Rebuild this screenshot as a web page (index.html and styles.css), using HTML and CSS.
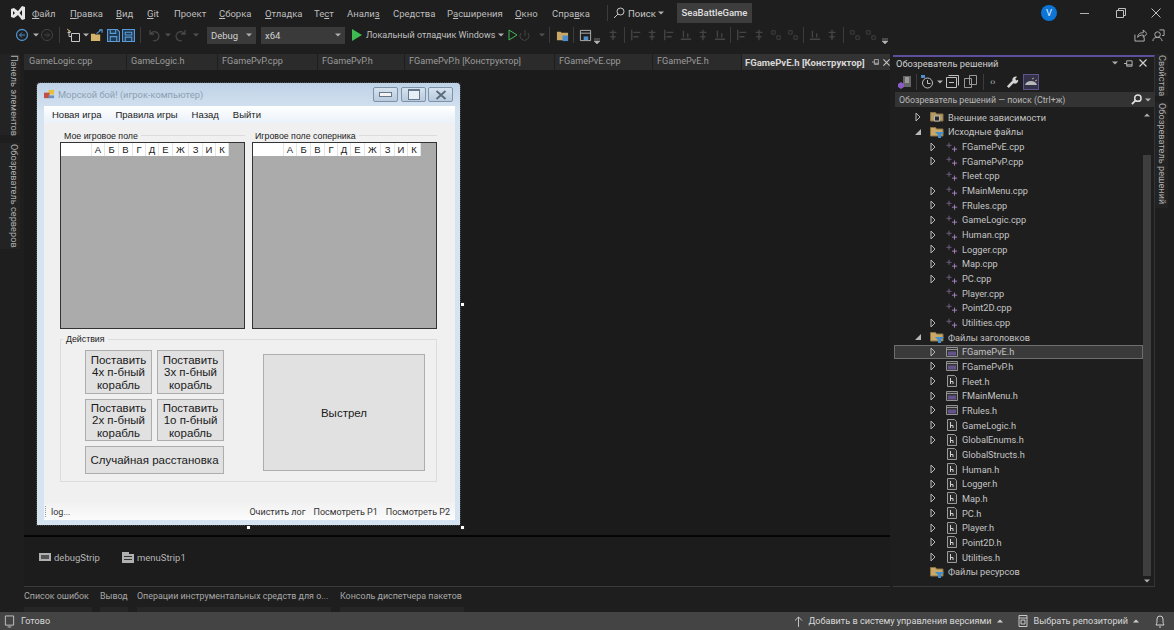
FILE: index.html
```html
<!DOCTYPE html>
<html lang="ru">
<head>
  <meta charset="UTF-8">
  <title>SeaBattleGame</title>
  <link rel="stylesheet" href="styles.css">
</head>
<body>
  <svg class="defs" width="0" height="0">
    <symbol id="ic-closed" viewBox="0 0 8 10"><path d="M2 1l4 4-4 4z" fill="none" stroke="#b8b8b8"/></symbol>
    <symbol id="ic-open" viewBox="0 0 8 10"><path d="M7 2v6H1z" fill="#b8b8b8"/></symbol>
    <symbol id="ic-cpp" viewBox="0 0 14 12"><path d="M3.500 1v6M.5 4h6" stroke="#7a6590" fill="none"/><path d="M10 5.500v6M7 8.500h6" stroke="#b48cd2" fill="none"/></symbol>
    <symbol id="ic-h" viewBox="0 0 12 12"><path d="M1.500 .5h7l2 2v9h-9z" fill="#2a2a2a" stroke="#9a9a9a"/><path d="M4.500 3v6M4.500 6.500h2.500v2.500" fill="none" stroke="#d0d0d0"/></symbol>
    <symbol id="ic-form" viewBox="0 0 12 12"><path d="M.5 1.500h11v9H.5z" fill="#333" stroke="#929292"/><path d="M.5 3.500h11" stroke="#929292"/><path d="M2 5.500h8v4H2z" fill="#64528a"/></symbol>
    <symbol id="ic-folder" viewBox="0 0 14 12"><path d="M.5 1.500h5l1 1.500h6.500v7H.5z" fill="#c9a868" stroke="#8a7446"/><path d="M5 6h9L11 9v3H8V9z" fill="#3f8fd0"/></symbol>
    <symbol id="ic-ext" viewBox="0 0 14 12"><path d="M.5 1.500h5l1 1.500h6.500v7H.5z" fill="#b49a64" stroke="#8a7446"/><path d="M4.500 5h5v5h-5z" fill="#2a2a2a" stroke="#b8b8b8"/></symbol>
    <symbol id="ic-dim1" viewBox="0 0 14 14"><path d="M2 1v12M4 4h8M4 9h6" fill="none" stroke="#444" stroke-width="1.600"/></symbol>
    <symbol id="ic-dim2" viewBox="0 0 14 14"><path d="M7 1v12M3 4h8M4 9h6" fill="none" stroke="#444" stroke-width="1.600"/></symbol>
    <symbol id="ic-dim3" viewBox="0 0 14 14"><path d="M1 12h12M4 2v8M9 5v5" fill="none" stroke="#444" stroke-width="1.600"/></symbol>
    <symbol id="ic-dim4" viewBox="0 0 14 14"><path d="M2 2h4v4H2zM8 8h4v4H8z" fill="none" stroke="#444"/></symbol>
    <symbol id="ic-drop" viewBox="0 0 6 4"><path d="M0 .5h6L3 3.500z" fill="#b0b0b0"/></symbol>
  </svg>

  <!-- Главное меню -->
  <header class="menubar">
    <svg class="vs-logo" viewBox="0 0 14 14" width="14" height="14"><path d="M0 3l3-1 4 3 4-5 3 1v12l-3 1-4-5-4 3-3-1zM2 5v4l2-2zM11 4L8.500 7 11 10z" fill="#e6e6e6" fill-rule="evenodd"/></svg>
    <nav class="menu">
      <span class="m-file"><u>Ф</u>айл</span>
      <span class="m-edit"><u>П</u>равка</span>
      <span class="m-view"><u>В</u>ид</span>
      <span class="m-git"><u>G</u>it</span>
      <span class="m-proj">Проект</span>
      <span class="m-build"><u>С</u>борка</span>
      <span class="m-debug"><u>О</u>тладка</span>
      <span class="m-test">Те<u>с</u>т</span>
      <span class="m-anal">Анали<u>з</u></span>
      <span class="m-tools">Сре<u>д</u>ства</span>
      <span class="m-ext">Р<u>а</u>сширения</span>
      <span class="m-win"><u>О</u>кно</span>
      <span class="m-help">Спра<u>в</u>ка</span>
    </nav>
    <span class="menu-sep"></span>
    <svg class="search-ic" viewBox="0 0 12 12" width="12" height="12"><circle cx="7.500" cy="4.500" r="3.500" fill="none" stroke="#c8c8c8"/><path d="M5 7l-4 4" stroke="#c8c8c8"/></svg>
    <span class="search-label">Поиск</span>
    <svg class="drop" width="6" height="4"><use href="#ic-drop"/></svg>
    <span class="project-name">SeaBattleGame</span>
    <span class="avatar">V</span>
    <svg class="win-btn win-min" viewBox="0 0 10 10" width="10" height="10"><path d="M0 5.500h9" stroke="#b0b0b0"/></svg>
    <svg class="win-btn win-max" viewBox="0 0 10 10" width="10" height="10"><path d="M.5 2.500h7v7h-7zM2.500 2.500v-2h7v7h-2" fill="none" stroke="#c0c0c0"/></svg>
    <svg class="win-btn win-close" viewBox="0 0 10 10" width="10" height="10"><path d="M.5.500l9 9M9.500.500l-9 9" stroke="#c0c0c0"/></svg>
  </header>

  <!-- Панель инструментов -->
  <div class="toolbar">
    <span class="grip"></span>
    <svg class="tb-back" viewBox="0 0 14 14" width="14" height="14"><circle cx="7" cy="7" r="5.500" fill="none" stroke="#4f8fc9" stroke-width="1.300"/><path d="M10 7H4.500M7 4.500L4.500 7 7 9.500" fill="none" stroke="#4f8fc9"/></svg>
    <svg class="drop tb-d1" width="6" height="4"><use href="#ic-drop"/></svg>
    <svg class="tb-fwd" viewBox="0 0 14 14" width="14" height="14"><circle cx="7" cy="7" r="5.500" fill="none" stroke="#444"/><path d="M4 7h5.500M7 4.500L9.500 7 7 9.500" fill="none" stroke="#444"/></svg>
    <span class="tb-sep tb-s1"></span>
    <svg class="tb-new" viewBox="0 0 14 14" width="14" height="14"><path d="M5.500 5.500h8v8h-8zM1.500 4.500h3M3 2v6.500h2.500" fill="none" stroke="#c8c8c8"/><path d="M1 1l4 3" stroke="#d0b060"/></svg>
    <svg class="drop tb-d2" width="6" height="4"><use href="#ic-drop"/></svg>
    <svg class="tb-open" viewBox="0 0 14 14" width="13" height="13"><path d="M1 5h4l1 1h5v7H1z" fill="#d4b46c"/><path d="M7 5l5-4M10 1h3v3" fill="none" stroke="#5b9bd5" stroke-width="1.200"/></svg>
    <svg class="tb-save" viewBox="0 0 12 12" width="13" height="13"><path d="M.5.500h9l2 2v9H.5z" fill="#1f3a55" stroke="#5b9bd5"/><path d="M3 .5v3.500h5V.5M3 11.500V7h6v4.500" fill="none" stroke="#5b9bd5"/></svg>
    <svg class="tb-saveall" viewBox="0 0 12 12" width="13" height="13"><path d="M.5.500h11v11H.5z" fill="#1f3a55" stroke="#5b9bd5"/><path d="M3 3h6v2.500H3zM3 11V7.500h6V11" fill="none" stroke="#5b9bd5"/></svg>
    <span class="tb-sep tb-s2"></span>
    <svg class="tb-undo" viewBox="0 0 14 14" width="14" height="14"><path d="M3 2v4h4M3.500 6A4.500 4.500 0 1 1 6 12.500" fill="none" stroke="#484848" stroke-width="1.300"/></svg>
    <svg class="drop dim tb-d3" width="6" height="4"><use href="#ic-drop"/></svg>
    <svg class="tb-redo" viewBox="0 0 14 14" width="14" height="14"><path d="M11 2v4H7M10.500 6A4.500 4.500 0 1 0 8 12.500" fill="none" stroke="#484848" stroke-width="1.300"/></svg>
    <svg class="drop dim tb-d4" width="6" height="4"><use href="#ic-drop"/></svg>
    <span class="combo combo-debug">Debug<svg class="drop" width="6" height="4"><use href="#ic-drop"/></svg></span>
    <span class="combo combo-arch">x64<svg class="drop" width="6" height="4"><use href="#ic-drop"/></svg></span>
    <svg class="tb-play" viewBox="0 0 10 12" width="10" height="12"><path d="M0 0l10 6-10 6z" fill="#3fb950"/></svg>
    <span class="run-label">Локальный отладчик Windows</span>
    <svg class="drop tb-d5" width="6" height="4"><use href="#ic-drop"/></svg>
    <svg class="tb-play2" viewBox="0 0 10 12" width="10" height="12"><path d="M1 1l8 5-8 5z" fill="none" stroke="#3fb950"/></svg>
    <svg class="tb-reload" viewBox="0 0 12 12" width="12" height="12"><path d="M6 1v6M2 4a4.500 4.500 0 1 0 7 0" fill="none" stroke="#444"/></svg>
    <svg class="drop dim tb-d6" width="6" height="4"><use href="#ic-drop"/></svg>
    <span class="tb-sep tb-s3"></span>
    <svg class="tb-folder" viewBox="0 0 14 14" width="13" height="13"><path d="M1 3h4l1 1h7v8H1z" fill="#c9a868"/><path d="M7 7h6v6H7z" fill="#4f8fc9"/></svg>
    <span class="tb-sep tb-s4"></span>
    <svg class="tb-panel" viewBox="0 0 14 14" width="13" height="13"><path d="M1.500 1.500h11v11h-11zM1.500 4.500h11" fill="none" stroke="#b8b8b8"/><path d="M5 8h5v4H5z" fill="#4f8fc9"/></svg>
    <svg class="tb-d7" viewBox="0 0 6 6" width="6" height="6"><path d="M0 1h6M0 3h6L3 6z" fill="#b0b0b0" stroke="#b0b0b0" stroke-width=".6"/></svg>
    <span class="grip tb-grip2"></span>
    <div class="dim-icons">
      <svg width="12" height="12"><use href="#ic-dim2"/></svg>
      <span class="tb-sep"></span>
      <svg width="12" height="12"><use href="#ic-dim1"/></svg>
      <svg width="12" height="12"><use href="#ic-dim2"/></svg>
      <svg width="12" height="12"><use href="#ic-dim1"/></svg>
      <svg width="12" height="12"><use href="#ic-dim3"/></svg>
      <svg width="12" height="12"><use href="#ic-dim2"/></svg>
      <svg width="12" height="12"><use href="#ic-dim3"/></svg>
      <span class="tb-sep"></span>
      <svg width="12" height="12"><use href="#ic-dim1"/></svg>
      <svg width="12" height="12"><use href="#ic-dim2"/></svg>
      <svg width="12" height="12"><use href="#ic-dim4"/></svg>
      <svg width="12" height="12"><use href="#ic-dim4"/></svg>
      <span class="tb-sep"></span>
      <svg width="12" height="12"><use href="#ic-dim3"/></svg>
      <svg width="12" height="12"><use href="#ic-dim2"/></svg>
      <span class="tb-sep"></span>
      <svg width="12" height="12"><use href="#ic-dim4"/></svg>
      <svg width="12" height="12"><use href="#ic-dim4"/></svg>
    </div>
    <svg class="tb-d8" viewBox="0 0 6 6" width="6" height="6"><path d="M0 1h6M0 3h6L3 6z" fill="#b0b0b0" stroke="#b0b0b0" stroke-width=".6"/></svg>
    <svg class="tb-share" viewBox="0 0 14 14" width="13" height="13"><path d="M1 6v7h10V9M4 9c0-4 3-5 6-5V1l4 4-4 4V6.500C7 6.500 5.500 7 4 9z" fill="none" stroke="#b8b8b8"/></svg>
    <svg class="tb-feedback" viewBox="0 0 14 14" width="13" height="13"><circle cx="6" cy="6" r="3" fill="none" stroke="#b8b8b8"/><path d="M1 13c0-3 2-4 5-4s4 1 5 4M8 1h5v6h-2" fill="none" stroke="#b8b8b8"/></svg>
  </div>

  <main class="main">
    <aside class="side-strip">
      <span class="side-tab side-toolbox">Панель элементов</span>
      <span class="side-tab side-servers">Обозреватель серверов</span>
    </aside>

    <section class="doc">
      <div class="tabs">
        <span class="tab tab-1">GameLogic.cpp</span>
        <span class="tab tab-2">GameLogic.h</span>
        <span class="tab tab-3">FGamePvP.cpp</span>
        <span class="tab tab-4">FGamePvP.h</span>
        <span class="tab tab-5">FGamePvP.h [Конструктор]</span>
        <span class="tab tab-6">FGamePvE.cpp</span>
        <span class="tab tab-7">FGamePvE.h</span>
        <span class="tab tab-active">FGamePvE.h [Конструктор]
          <svg class="tab-pin" viewBox="0 0 10 10" width="8" height="8"><path d="M0 5h3M3 2v6h5V2zM3 6.500h5" fill="none" stroke="#c0c0c0"/></svg>
          <svg class="tab-close" viewBox="0 0 8 8" width="7" height="7"><path d="M.5.500l7 7M7.500.500l-7 7" stroke="#c8c8c8" stroke-width="1.200"/></svg>
        </span>
      </div>

      <div class="designer">
        <!-- Форма на холсте конструктора -->
        <div class="form">
          <div class="form-title">
            <svg class="form-ic" viewBox="0 0 12 12" width="11" height="11"><path d="M5 1h6v5H5z" fill="#e8c040"/><path d="M0 4h6v6H0z" fill="#c05040"/><path d="M5 7h6v3H5z" fill="#6a8fc0"/></svg>
            <span class="form-caption">Морской бой! (игрок-компьютер)</span>
            <span class="cap-btn cap-min"></span>
            <span class="cap-btn cap-max"></span>
            <span class="cap-btn cap-close">
              <svg viewBox="0 0 12 10" width="12" height="10"><path d="M1.500 1l9 8M10.500 1l-9 8" stroke="#5a6a7a" stroke-width="1.800"/></svg>
            </span>
          </div>
          <div class="form-client">
            <div class="form-menu">
              <span>Новая игра</span>
              <span>Правила игры</span>
              <span>Назад</span>
              <span>Выйти</span>
            </div>
            <div class="boards">
              <div class="board">
                <div class="board-label">Мое игровое поле</div>
                <div class="grid">
                  <div class="grid-head">
                    <span></span><span>А</span><span>Б</span><span>В</span><span>Г</span><span>Д</span><span>Е</span><span>Ж</span><span>З</span><span>И</span><span>К</span>
                  </div>
                </div>
              </div>
              <div class="board">
                <div class="board-label">Игровое поле соперника</div>
                <div class="grid">
                  <div class="grid-head">
                    <span></span><span>А</span><span>Б</span><span>В</span><span>Г</span><span>Д</span><span>Е</span><span>Ж</span><span>З</span><span>И</span><span>К</span>
                  </div>
                </div>
              </div>
            </div>
            <fieldset class="actions">
              <legend>Действия</legend>
              <div class="place-btns">
                <button class="btn">Поставить<br>4х п-бный<br>корабль</button>
                <button class="btn">Поставить<br>3х п-бный<br>корабль</button>
                <button class="btn">Поставить<br>2х п-бный<br>корабль</button>
                <button class="btn">Поставить<br>1о п-бный<br>корабль</button>
                <button class="btn btn-wide">Случайная расстановка</button>
              </div>
              <button class="btn btn-shot">Выстрел</button>
            </fieldset>
            <div class="form-status">
              <span class="status-grip"></span>
              <span class="log-label">log...</span>
              <span class="status-link">Очистить лог</span>
              <span class="status-link">Посмотреть Р1</span>
              <span class="status-link">Посмотреть Р2</span>
            </div>
          </div>
          <span class="handle handle-r"></span>
          <span class="handle handle-b"></span>
          <span class="handle handle-c"></span>
        </div>
      </div>

      <div class="tray">
        <span class="tray-item">
          <svg viewBox="0 0 12 10" width="12" height="10"><path d="M0 0h12v8H0z" fill="#b0b0b0"/><path d="M2 2h8v4H2z" fill="#555"/></svg>
          debugStrip
        </span>
        <span class="tray-item">
          <svg viewBox="0 0 12 11" width="12" height="11"><path d="M0 0h7v2h5v9H0z" fill="#b0b0b0"/><path d="M2 4h8v1H2zM2 7h8v1H2z" fill="#333"/></svg>
          menuStrip1
        </span>
      </div>
    </section>

    <section class="solution">
      <div class="sol-title">
        <span>Обозреватель решений</span>
        <span class="sol-grip"></span>
        <svg class="drop" width="6" height="4"><use href="#ic-drop"/></svg>
        <svg class="sol-pin" viewBox="0 0 10 10" width="9" height="9"><path d="M0 5h3M3 2v6h6V2zM3 6.500h6" fill="none" stroke="#c0c0c0"/></svg>
        <svg class="sol-close" viewBox="0 0 8 8" width="8" height="8"><path d="M.5.500l7 7M7.500.500l-7 7" stroke="#d0d0d0" stroke-width="1.200"/></svg>
      </div>
      <div class="sol-tools">
        <svg class="st-home" viewBox="0 0 14 14" width="14" height="14"><path d="M5 1h8v11H5z" fill="#666"/><path d="M7 3h4M7 5h4M7 7h4" stroke="#ccc"/><path d="M0 9l3-2 3 2v3l-3 2-3-2z" fill="#8a5cc8"/></svg>
        <span class="tb-sep st-sep"></span>
        <svg class="st-hist" viewBox="0 0 14 14" width="14" height="14"><circle cx="7.500" cy="8" r="5" fill="none" stroke="#c0c0c0"/><path d="M7.500 5v3.500h3" fill="none" stroke="#c0c0c0"/><path d="M1 0h4v3H1z" fill="#4f8fc9"/></svg>
        <svg class="drop st-drop" width="6" height="4"><use href="#ic-drop"/></svg>
        <svg class="st-collapse" viewBox="0 0 13 13" width="13" height="13"><path d="M2.500 .5h10v10M.5 2.500h10v10H.5zM3 7.500h5" fill="none" stroke="#c0c0c0"/></svg>
        <svg class="st-copy" viewBox="0 0 13 13" width="13" height="13"><path d="M5.500 .5h7v9h-7zM.5 3.500h7v9h-7z" fill="none" stroke="#999"/></svg>
        <span class="tb-sep st-sep2"></span>
        <span class="st-code">‹›</span>
        <svg class="st-wrench" viewBox="0 0 14 14" width="13" height="13"><path d="M1 12l6-6a3.500 3.500 0 0 1 5-4l-2 2 1 2 2-1a3.500 3.500 0 0 1-5 4l-5 5z" fill="#d4d4d4"/></svg>
        <span class="st-active">
          <svg viewBox="0 0 14 12" width="14" height="12"><path d="M1 9c1-3 3-4 6-4s5 1 6 4z" fill="#b8b8b8"/><path d="M8 3l2-1M11 5l2-1" stroke="#c9a868"/></svg>
        </span>
      </div>
      <div class="sol-search">
        <span>Обозреватель решений — поиск (Ctrl+ж)</span>
        <svg class="sol-search-ic" viewBox="0 0 12 12" width="11" height="11"><circle cx="7.500" cy="4.500" r="3.500" fill="none" stroke="#e0e0e0" stroke-width="1.600"/><path d="M5 7l-4 4" stroke="#e0e0e0" stroke-width="2"/></svg>
        <svg class="drop" width="6" height="4"><use href="#ic-drop"/></svg>
      </div>
      <div class="sol-body">
        <ul class="tree">
          <li class="row lvl1"><svg class="tw"><use href="#ic-closed"/></svg><svg class="ic14"><use href="#ic-ext"/></svg>Внешние зависимости</li>
          <li class="row lvl1"><svg class="tw"><use href="#ic-open"/></svg><svg class="ic14"><use href="#ic-folder"/></svg>Исходные файлы</li>
          <li class="row lvl2"><svg class="tw"><use href="#ic-closed"/></svg><svg class="ic12"><use href="#ic-cpp"/></svg>FGamePvE.cpp</li>
          <li class="row lvl2"><svg class="tw"><use href="#ic-closed"/></svg><svg class="ic12"><use href="#ic-cpp"/></svg>FGamePvP.cpp</li>
          <li class="row lvl2"><span class="tw"></span><svg class="ic12"><use href="#ic-cpp"/></svg>Fleet.cpp</li>
          <li class="row lvl2"><svg class="tw"><use href="#ic-closed"/></svg><svg class="ic12"><use href="#ic-cpp"/></svg>FMainMenu.cpp</li>
          <li class="row lvl2"><svg class="tw"><use href="#ic-closed"/></svg><svg class="ic12"><use href="#ic-cpp"/></svg>FRules.cpp</li>
          <li class="row lvl2"><svg class="tw"><use href="#ic-closed"/></svg><svg class="ic12"><use href="#ic-cpp"/></svg>GameLogic.cpp</li>
          <li class="row lvl2"><svg class="tw"><use href="#ic-closed"/></svg><svg class="ic12"><use href="#ic-cpp"/></svg>Human.cpp</li>
          <li class="row lvl2"><svg class="tw"><use href="#ic-closed"/></svg><svg class="ic12"><use href="#ic-cpp"/></svg>Logger.cpp</li>
          <li class="row lvl2"><svg class="tw"><use href="#ic-closed"/></svg><svg class="ic12"><use href="#ic-cpp"/></svg>Map.cpp</li>
          <li class="row lvl2"><svg class="tw"><use href="#ic-closed"/></svg><svg class="ic12"><use href="#ic-cpp"/></svg>PC.cpp</li>
          <li class="row lvl2"><span class="tw"></span><svg class="ic12"><use href="#ic-cpp"/></svg>Player.cpp</li>
          <li class="row lvl2"><span class="tw"></span><svg class="ic12"><use href="#ic-cpp"/></svg>Point2D.cpp</li>
          <li class="row lvl2"><svg class="tw"><use href="#ic-closed"/></svg><svg class="ic12"><use href="#ic-cpp"/></svg>Utilities.cpp</li>
          <li class="row lvl1"><svg class="tw"><use href="#ic-open"/></svg><svg class="ic14"><use href="#ic-folder"/></svg>Файлы заголовков</li>
          <li class="row lvl2 selected"><svg class="tw"><use href="#ic-closed"/></svg><svg class="ic12"><use href="#ic-form"/></svg>FGamePvE.h</li>
          <li class="row lvl2"><svg class="tw"><use href="#ic-closed"/></svg><svg class="ic12"><use href="#ic-form"/></svg>FGamePvP.h</li>
          <li class="row lvl2"><svg class="tw"><use href="#ic-closed"/></svg><svg class="ic12"><use href="#ic-h"/></svg>Fleet.h</li>
          <li class="row lvl2"><svg class="tw"><use href="#ic-closed"/></svg><svg class="ic12"><use href="#ic-form"/></svg>FMainMenu.h</li>
          <li class="row lvl2"><svg class="tw"><use href="#ic-closed"/></svg><svg class="ic12"><use href="#ic-form"/></svg>FRules.h</li>
          <li class="row lvl2"><svg class="tw"><use href="#ic-closed"/></svg><svg class="ic12"><use href="#ic-h"/></svg>GameLogic.h</li>
          <li class="row lvl2"><svg class="tw"><use href="#ic-closed"/></svg><svg class="ic12"><use href="#ic-h"/></svg>GlobalEnums.h</li>
          <li class="row lvl2"><span class="tw"></span><svg class="ic12"><use href="#ic-h"/></svg>GlobalStructs.h</li>
          <li class="row lvl2"><svg class="tw"><use href="#ic-closed"/></svg><svg class="ic12"><use href="#ic-h"/></svg>Human.h</li>
          <li class="row lvl2"><svg class="tw"><use href="#ic-closed"/></svg><svg class="ic12"><use href="#ic-h"/></svg>Logger.h</li>
          <li class="row lvl2"><svg class="tw"><use href="#ic-closed"/></svg><svg class="ic12"><use href="#ic-h"/></svg>Map.h</li>
          <li class="row lvl2"><svg class="tw"><use href="#ic-closed"/></svg><svg class="ic12"><use href="#ic-h"/></svg>PC.h</li>
          <li class="row lvl2"><svg class="tw"><use href="#ic-closed"/></svg><svg class="ic12"><use href="#ic-h"/></svg>Player.h</li>
          <li class="row lvl2"><svg class="tw"><use href="#ic-closed"/></svg><svg class="ic12"><use href="#ic-h"/></svg>Point2D.h</li>
          <li class="row lvl2"><svg class="tw"><use href="#ic-closed"/></svg><svg class="ic12"><use href="#ic-h"/></svg>Utilities.h</li>
          <li class="row lvl1"><span class="tw"></span><svg class="ic14"><use href="#ic-folder"/></svg>Файлы ресурсов</li>
        </ul>
        <div class="scrollbar">
          <svg class="scroll-up" width="6" height="4"><use href="#ic-drop"/></svg>
          <div class="scroll-thumb"></div>
          <svg class="scroll-down" width="6" height="4"><use href="#ic-drop"/></svg>
        </div>
      </div>
    </section>

    <aside class="side-strip side-right">
      <span class="side-tab side-props">Свойства</span>
      <span class="side-tab side-sol">Обозреватель решений</span>
    </aside>
  </main>

  <div class="bottom-tabs">
    <span class="btab btab-1">Список ошибок</span>
    <span class="btab btab-2">Вывод</span>
    <span class="btab btab-3">Операции инструментальных средств для о...</span>
    <span class="btab btab-4">Консоль диспетчера пакетов</span>
  </div>

  <footer class="statusbar">
    <svg class="sb-ic" viewBox="0 0 12 14" width="11" height="14"><path d="M1.500 1.500h9v10h-9zM4 13.500h4" fill="none" stroke="#c8c8c8"/></svg>
    <span class="sb-ready">Готово</span>
    <svg class="sb-up" viewBox="0 0 10 12" width="9" height="11"><path d="M5 12V1M1 5l4-4 4 4" fill="none" stroke="#d0d0d0"/></svg>
    <span class="sb-text sb-vcs">Добавить в систему управления версиями</span>
    <svg class="sb-tri" viewBox="0 0 6 4" width="6" height="4"><path d="M0 3.500h6L3 .5z" fill="#d0d0d0"/></svg>
    <svg class="sb-repo" viewBox="0 0 10 12" width="10" height="12"><path d="M1 .5h8v11H1zM1 3h8M3 5h4v4H3z" fill="none" stroke="#c8c8c8"/></svg>
    <span class="sb-text sb-repo-text">Выбрать репозиторий</span>
    <svg class="sb-tri" viewBox="0 0 6 4" width="6" height="4"><path d="M0 3.500h6L3 .5z" fill="#d0d0d0"/></svg>
    <svg class="sb-bell" viewBox="0 0 10 14" width="10" height="14"><path d="M1 11c1-2 1-3 1-6a3 3 0 0 1 6 0c0 3 0 4 1 6zM4 13h2" fill="none" stroke="#d0d0d0"/></svg>
  </footer>
</body>
</html>
```

FILE: styles.css
```css
* { box-sizing: border-box; }
html, body { margin: 0; height: 100%; }
body {
  width: 1174px;
  height: 630px;
  overflow: hidden;
  display: flex;
  flex-direction: column;
  background: #1e1e1e;
  color: #c8c8c8;
  font-family: Roboto, "Noto Sans", sans-serif;
  font-size: 9.500px;
}
svg { flex: none; display: block; }
.defs { position: absolute; }
.drop.dim { opacity: .35; }

/* menu */
.menubar { height: 26px; display: flex; align-items: center; flex: none; }
.vs-logo { margin-left: 11px; }
.menu { display: flex; margin-left: 7px; width: 575px; }
.menu span { flex: none; color: #bdbdbd; }
.menu u { text-decoration-thickness: 1px; }
.m-file { width: 38px; }
.m-edit { width: 46px; }
.m-view { width: 31px; }
.m-git { width: 27px; }
.m-proj { width: 45px; }
.m-build { width: 46px; }
.m-debug { width: 49px; }
.m-test { width: 33px; }
.m-anal { width: 46px; }
.m-tools { width: 54px; }
.m-ext { width: 68px; }
.m-win { width: 37px; }
.menu-sep { width: 1px; height: 16px; background: #3c3c3c; }
.search-ic { margin-left: 5px; }
.search-label { margin-left: 3px; width: 30px; color: #c8c8c8; }
.menubar > .drop { margin-left: 0; }
.project-name {
  margin-left: 13px;
  width: 75px;
  height: 20px;
  line-height: 20px;
  text-align: center;
  background: #3d3d3d;
  color: #e0e0e0;
  font-weight: 500;
}
.avatar {
  margin-left: auto;
  width: 16px;
  height: 16px;
  border-radius: 50%;
  background: #0c75d6;
  color: #e8f2ff;
  text-align: center;
  line-height: 16px;
}
.win-min { margin-left: 23px; }
.win-max { margin-left: 26px; }
.win-close { margin-left: 25px; margin-right: 13px; }

/* toolbar */
.toolbar { height: 26px; display: flex; align-items: center; flex: none; padding-left: 10px; padding-bottom: 8px; }
.grip { width: 4px; height: 14px; background-image: radial-gradient(#4a4a4a 35%, transparent 40%); background-size: 2px 2px; }
.tb-sep { width: 1px; height: 16px; background: #3c3c3c; }
.tb-back { margin-left: 1px; }
.tb-d1 { margin-left: 4px; }
.tb-fwd { margin-left: 1px; }
.tb-s1 { margin-left: 5px; }
.tb-new { margin-left: 6px; }
.tb-d2 { margin-left: 3px; }
.tb-open { margin-left: 1px; }
.tb-save { margin-left: 4px; }
.tb-saveall { margin-left: 2px; }
.tb-s2 { margin-left: 5px; }
.tb-undo { margin-left: 6px; }
.tb-d3 { margin-left: 4px; }
.tb-redo { margin-left: 3px; }
.tb-d4 { margin-left: 5px; }
.combo {
  display: flex;
  align-items: center;
  justify-content: space-between;
  height: 17px;
  padding: 0 4px;
  background: #3a3a3a;
  color: #d0d0d0;
}
.combo-debug { margin-left: 8px; width: 49px; }
.combo-arch { margin-left: 5px; width: 84px; }
.tb-play { margin-left: 7px; }
.run-label { margin-left: 4px; width: 131px; white-space: nowrap; color: #c0c0c0; font-size: 9px; }
.tb-d5 { margin-left: 1px; }
.tb-play2 { margin-left: 4px; }
.tb-reload { margin-left: 1px; }
.tb-d6 { margin-left: 8px; }
.tb-s3 { margin-left: 4px; }
.tb-folder { margin-left: 6px; }
.tb-s4 { margin-left: 4px; }
.tb-panel { margin-left: 5px; }
.tb-d7 { margin-left: 2px; align-self: flex-end; }
.tb-grip2 { margin-left: 2px; }
.dim-icons { display: flex; align-items: center; gap: 4.800px; margin-left: 1px; }
.tb-d8 { margin-left: 5px; align-self: flex-end; }
.tb-share { margin-left: auto; }
.tb-feedback { margin-left: 5px; margin-right: 9px; }

/* main area */
.main { flex: 1; min-height: 0; display: flex; }
.side-strip { width: 24px; flex: none; display: flex; flex-direction: column; padding-top: 2px; gap: 8px; align-items: flex-start; }
.side-tab {
  writing-mode: vertical-rl;
  width: 20px;
  background: #232323;
  color: #b0b0b0;
  padding: 1px 0 0 0;
  font-size: 9.200px;
  white-space: nowrap;
}
.side-toolbox { height: 81px; }
.side-servers { height: 106px; }
.side-right { width: 19px; padding-top: 2px; gap: 6px; }
.side-right .side-tab { width: 13px; }
.side-props { height: 42px; }
.side-sol { height: 106px; }

.doc { width: 866px; flex: none; display: flex; flex-direction: column; }
.tabs { height: 16px; margin-top: 2px; flex: none; display: flex; }
.tab {
  flex: none;
  line-height: 15px;
  padding-left: 4px;
  background: #2b2b2b;
  color: #9c9c9c;
  font-size: 9.100px;
  border-right: 1px solid #1e1e1e;
  white-space: nowrap;
}
.tab-1 { width: 103px; padding-left: 5px; }
.tab-2 { width: 91px; }
.tab-3 { width: 100px; }
.tab-4 { width: 87px; }
.tab-5 { width: 150px; }
.tab-6 { width: 98px; }
.tab-7 { width: 89px; }
.tab-active {
  width: 148px;
  padding-left: 3px;
  background: #333;
  color: #d8d8d8;
  font-weight: 700;
  font-size: 9.500px;
  display: flex;
  align-items: center;
  border-right: 0;
}
.tab-pin { margin-left: auto; }
.tab-close { margin-left: 3px; }

/* designer */
.designer { height: 467px; flex: none; position: relative; background: #1b1b1b; border-bottom: 2px solid #050505; }
.form {
  position: absolute;
  left: 13px;
  top: 13px;
  width: 423px;
  height: 442px;
  display: flex;
  flex-direction: column;
  padding: 0 5px 5px 7px;
  background: linear-gradient(#bfd2e6, #d6e4f2 30px);
  border-radius: 3px 3px 0 0;
  outline: 1px dotted #4a4a4a;
  font-family: "Liberation Sans", Arial, sans-serif;
}
.form-title { height: 23px; flex: none; display: flex; align-items: center; }
.form-caption { margin-left: 3px; color: #8c9fb2; font-size: 9.300px; font-family: Roboto, sans-serif; }
.cap-btn {
  height: 15px;
  width: 25px;
  border: 1px solid #7f93a8;
  border-radius: 2px;
  background: linear-gradient(#d6e2ee, #b8cade);
  display: flex;
  align-items: center;
  justify-content: center;
}
.cap-min { margin-left: auto; }
.cap-min::before { content: ""; width: 11px; height: 3px; background: #f4f4f4; border: 1px solid #66788c; }
.cap-max { margin-left: 3px; }
.cap-max::before { content: ""; width: 10px; height: 8px; border: 1px solid #66788c; border-top-width: 2px; background: #e8eef5; }
.cap-close { margin-left: 2px; margin-right: 2px; }

.form-client { flex: 1; min-height: 0; display: flex; flex-direction: column; background: #f0f0f0; }
.form-menu {
  height: 17px;
  flex: none;
  display: flex;
  align-items: center;
  gap: 14px;
  padding-left: 8px;
  background: linear-gradient(#fff, #eaf1f9);
  color: #1a1a1a;
  font-size: 9.500px;
}
.boards { display: flex; gap: 7px; padding: 6px 0 0 16px; }
.board { width: 185px; }
.board-label { height: 13px; display: flex; align-items: center; padding-left: 4px; font-size: 8.800px; color: #222; white-space: nowrap; }
.board:last-child .board-label { padding-left: 3px; }
.board-label::after { content: ""; flex: 1; height: 1px; background: #dcdcdc; margin-left: 3px; }
.grid { height: 187px; border: 1px solid #333; background: #ababab; }
.grid-head {
  display: grid;
  grid-template-columns: 31px 13px 14px 14px 13px 13px 14px 16px 14px 13px 13px;
  width: 168px;
  height: 13px;
  background: #fff;
  font-size: 9.500px;
  line-height: 13px;
  text-align: center;
  color: #222;
}
.grid-head span { border-right: 1px solid #e4e4e4; }

.actions {
  display: flex;
  margin: 5px 0 0 16px;
  padding: 6px 0 0 24px;
  width: 377px;
  height: 148px;
  border: 1px solid #dcdcdc;
  min-width: 0;
}
.actions legend { padding: 0 3px; margin-left: -22px; font-size: 8.800px; line-height: 10px; color: #222; }
.place-btns { display: grid; grid-template-columns: 67px 67px; grid-template-rows: 44px 42px 28px; gap: 5px; width: 139px; height: 124px; }
.btn {
  margin: 0;
  padding: 1px 0 0;
  background: #e1e1e1;
  border: 1px solid #adadad;
  color: #1a1a1a;
  font-family: "Liberation Sans", Arial, sans-serif;
  font-size: 11.500px;
  line-height: 12.500px;
}
.btn-wide { grid-column: 1 / 3; }
.btn-shot { width: 162px; height: 117px; margin: 4px 0 0 39px; flex: none; }

.form-status {
  margin-top: auto;
  height: 17px;
  flex: none;
  display: flex;
  align-items: center;
  background: linear-gradient(#f2f2f2, #fbfbfb);
  color: #333;
  font-family: Roboto, sans-serif;
  font-size: 9px;
}
.status-grip { width: 2px; height: 11px; margin-left: 1px; border-left: 1px dotted #999; }
.log-label { margin-left: 4px; margin-right: auto; }
.status-link { margin-right: 8px; white-space: nowrap; }
.status-link:last-child { margin-right: 5px; }
.handle { position: absolute; width: 5px; height: 5px; background: #fff; border: 1px solid #222; }
.handle-r { right: -5px; top: 219px; }
.handle-b { left: 209px; bottom: -5px; }
.handle-c { right: -5px; bottom: -5px; }

.tray { flex: 1; display: flex; align-items: flex-start; padding: 15px 0 0 15px; gap: 22px; background: #1c1c1c; border-bottom: 1px solid #3a3a3a; }
.tray-item { display: flex; gap: 3px; align-items: center; color: #b4b4b4; }

/* solution explorer */
.solution {
  margin: 3px 0 0 3px;
  width: 262px;
  flex: none;
  display: flex;
  flex-direction: column;
  border-top: 2px solid #5c4f9e;
  border-bottom: 1px solid #3a3a3a;
  border-right: 1px solid #333;
}
.sol-title { height: 14px; flex: none; display: flex; align-items: center; padding: 0 0 2px 3px; color: #d0d0d0; font-size: 9.300px; }
.sol-grip { flex: 1; height: 4px; margin: 0 4px; background-image: radial-gradient(#3c3c3c 35%, transparent 40%); background-size: 2px 2px; }
.sol-pin { margin-left: 6px; }
.sol-close { margin: 0 7px 0 6px; }
.sol-tools { height: 21px; flex: none; display: flex; align-items: center; padding-left: 5px; }
.st-sep { margin-left: 4px; }
.st-hist { margin-left: 3px; }
.st-drop { margin-left: 3px; }
.st-collapse { margin-left: 3px; }
.st-copy { margin-left: 5px; }
.st-sep2 { margin-left: 6px; }
.st-code { margin-left: 6px; width: 12px; font-size: 9px; color: #c0c0c0; }
.st-wrench { margin-left: 4px; }
.st-active {
  margin-left: 4px;
  width: 16px;
  height: 16px;
  display: flex;
  align-items: center;
  justify-content: center;
  background: #33324a;
  border: 1px solid #5c568c;
}
.sol-search {
  height: 15px;
  flex: none;
  display: flex;
  align-items: center;
  padding: 0 3px 0 4px;
  margin-left: 2px;
  background: #333;
  color: #b8b8b8;
  font-size: 8.800px;
}
.sol-search span { margin-right: auto; }
.sol-search .drop { margin-left: 3px; }
.sol-body { flex: 1; min-height: 0; display: flex; padding-top: 3px; }
.tree { list-style: none; margin: 0; padding: 0; width: 250px; flex: none; }
.row { height: 14.670px; display: flex; align-items: center; color: #c4c4c4; font-size: 9.200px; white-space: nowrap; border: 1px solid transparent; margin-left: 1px; }
.tw { width: 8px; height: 10px; flex: none; }
.ic14 { width: 14px; height: 12px; margin: 0 4px 0 8px; }
.ic12 { width: 12px; height: 12px; margin: 0 4px 0 9px; }
.lvl1 { padding-left: 19px; }
.lvl2 { padding-left: 34px; }
.selected { background: #3a3a3a; border-color: #6e6e6e; }
.scrollbar { width: 8px; display: flex; flex-direction: column; align-items: center; }
.scroll-up { transform: rotate(180deg); margin-top: 3px; }
.scroll-thumb { width: 8px; margin-top: 38px; flex: 1; background: #3e3e3e; }
.scroll-down { margin: 3px 0; }

/* bottom */
.bottom-tabs { height: 25px; flex: none; display: flex; padding-top: 4px; font-size: 8.900px; }
.btab { flex: none; height: 21px; color: #a8a8a8; white-space: nowrap; border-bottom: 5px solid #262626; }
.btab-1 { margin-left: 24px; width: 68px; }
.btab-2 { margin-left: 8px; width: 28px; }
.btab-3 { margin-left: 9px; width: 194px; }
.btab-4 { margin-left: 9px; width: 124px; }

.statusbar { height: 18px; flex: none; display: flex; align-items: center; background: #444; color: #d8d8d8; padding-left: 4px; font-size: 9.100px; }
.sb-ready { margin-left: 6px; margin-right: auto; }
.sb-vcs { margin-left: 5px; }
.sb-tri { margin-left: 5px; }
.sb-repo { margin-left: 15px; }
.sb-repo-text { margin-left: 6px; }
.sb-bell { margin-left: 16px; margin-right: 9px; }
```
